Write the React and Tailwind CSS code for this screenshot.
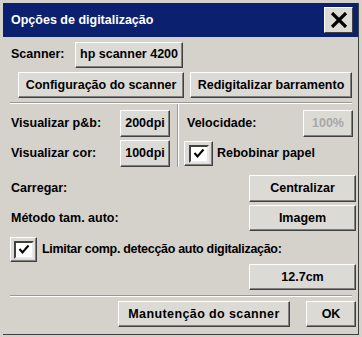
import React from 'react';

const font = { fontFamily: '"Liberation Sans", Arial, sans-serif' };

const Btn = ({ className = '', disabled, children }) => (
    <div
        className={`flex items-center justify-center h-[26px] bg-[#dcdad5] border border-t-white border-l-white border-r-[#404040] border-b-[#404040] shadow-[inset_-1px_-1px_0_#808080] text-[12.5px] font-bold ${disabled ? 'text-[#a8a8a8]' : 'text-black'} ${className}`}
    >
        {children}
    </div>
);

const Check = ({ className = '' }) => (
    <div
        className={`flex items-center justify-center h-[25px] bg-[#dcdad5] border border-t-white border-l-white border-r-[#404040] border-b-[#404040] shadow-[inset_-1px_-1px_0_#808080] ${className}`}
    >
        <div className="w-[20px] h-[18px] bg-white border-2 border-t-[#404040] border-l-[#404040] border-r-[#e8e8e8] border-b-[#e8e8e8] flex items-center justify-center">
            <svg width="12" height="11" viewBox="0 0 12 11">
                <path d="M1.5 5 L4.5 8.5 L10.5 1.5" fill="none" stroke="black" strokeWidth="2" />
            </svg>
        </div>
    </div>
);

const Separator = ({ className = '' }) => (
    <div className={`h-[2px] border-t border-t-[#9a9894] border-b border-b-white ${className}`} />
);

const App = () => {
    return (
        <div className="w-[362px] h-[337px] bg-[#d5d2cc] pl-[3px] pt-[3px]" style={font}>
            <div className="w-[356px] h-[332px] border-r border-b border-r-[#404040] border-b-[#404040]">
                {/* title bar */}
                <div className="h-[34px] bg-[#0b2170] flex items-center justify-between pl-[8px] pr-[5px]">
                    <span className="text-white font-bold text-[12.5px]">Opções de digitalização</span>
                    <div className="w-[29px] h-[26px] bg-[#dcdad5] border border-t-white border-l-white border-r-[#404040] border-b-[#404040] flex items-center justify-center">
                        <svg width="18" height="16" viewBox="0 0 18 16">
                            <path d="M2 1 L16 15 M16 1 L2 15" stroke="black" strokeWidth="3.2" />
                        </svg>
                    </div>
                </div>

                {/* scanner */}
                <div className="flex items-center h-[25px] mt-[5px] text-[12.5px] font-bold">
                    <span className="ml-[8px] w-[64px]">Scanner:</span>
                    <Btn className="w-[108px] h-[25px]">hp scanner 4200</Btn>
                </div>

                <div className="flex mt-[5px] ml-[15px] gap-[6px]">
                    <Btn className="w-[166px]">Configuração do scanner</Btn>
                    <Btn className="w-[162px]">Redigitalizar barramento</Btn>
                </div>

                <Separator className="mt-[4px] ml-[7px] w-[342px]" />

                {/* preview / speed */}
                <div className="flex h-[63px] text-[12.5px] font-bold">
                    <div className="w-[174px] pl-[8px] pt-[6px] flex flex-col gap-[3px]">
                        <div className="flex items-center h-[27px]">
                            <span className="w-[109px]">Visualizar p&amp;b:</span>
                            <Btn className="w-[50px] h-[27px]">200dpi</Btn>
                        </div>
                        <div className="flex items-center h-[27px]">
                            <span className="w-[109px]">Visualizar cor:</span>
                            <Btn className="w-[50px] h-[27px]">100dpi</Btn>
                        </div>
                    </div>
                    <div className="w-[2px] border-l border-l-[#9a9894] border-r border-r-white" />
                    <div className="flex-1 pt-[6px] flex flex-col gap-[3px]">
                        <div className="flex items-center h-[27px]">
                            <span className="ml-[8px] w-[116px]">Velocidade:</span>
                            <Btn disabled className="w-[50px] h-[27px]">100%</Btn>
                        </div>
                        <div className="flex items-center h-[27px]">
                            <Check className="ml-[5px] w-[29px]" />
                            <span className="ml-[4px]">Rebobinar papel</span>
                        </div>
                    </div>
                </div>

                {/* carregar */}
                <div className="flex items-center justify-between mt-[8px] pl-[8px] pr-[2px] text-[12.5px] font-bold">
                    <span>Carregar:</span>
                    <Btn className="w-[107px] h-[27px]">Centralizar</Btn>
                </div>
                <div className="flex items-center justify-between mt-[3px] pl-[8px] pr-[2px] text-[12.5px] font-bold">
                    <span>Método tam. auto:</span>
                    <Btn className="w-[107px]">Imagem</Btn>
                </div>

                <div className="flex items-center mt-[6px] ml-[7px] text-[12.5px] font-bold">
                    <Check className="w-[27px]" />
                    <span className="ml-[5px] tracking-[-0.3px]">Limitar comp. detecção auto digitalização:</span>
                </div>

                <div className="flex justify-end mt-[2px] pr-[2px]">
                    <Btn className="w-[107px]">12.7cm</Btn>
                </div>

                <Separator className="mt-[5px] ml-[7px] w-[342px]" />

                <div className="flex justify-end gap-[16px] mt-[4px] pr-[2px]">
                    <Btn className="w-[172px] tracking-[0.4px]">Manutenção do scanner</Btn>
                    <Btn className="w-[50px]">OK</Btn>
                </div>
            </div>
        </div>
    );
};

export default App;
